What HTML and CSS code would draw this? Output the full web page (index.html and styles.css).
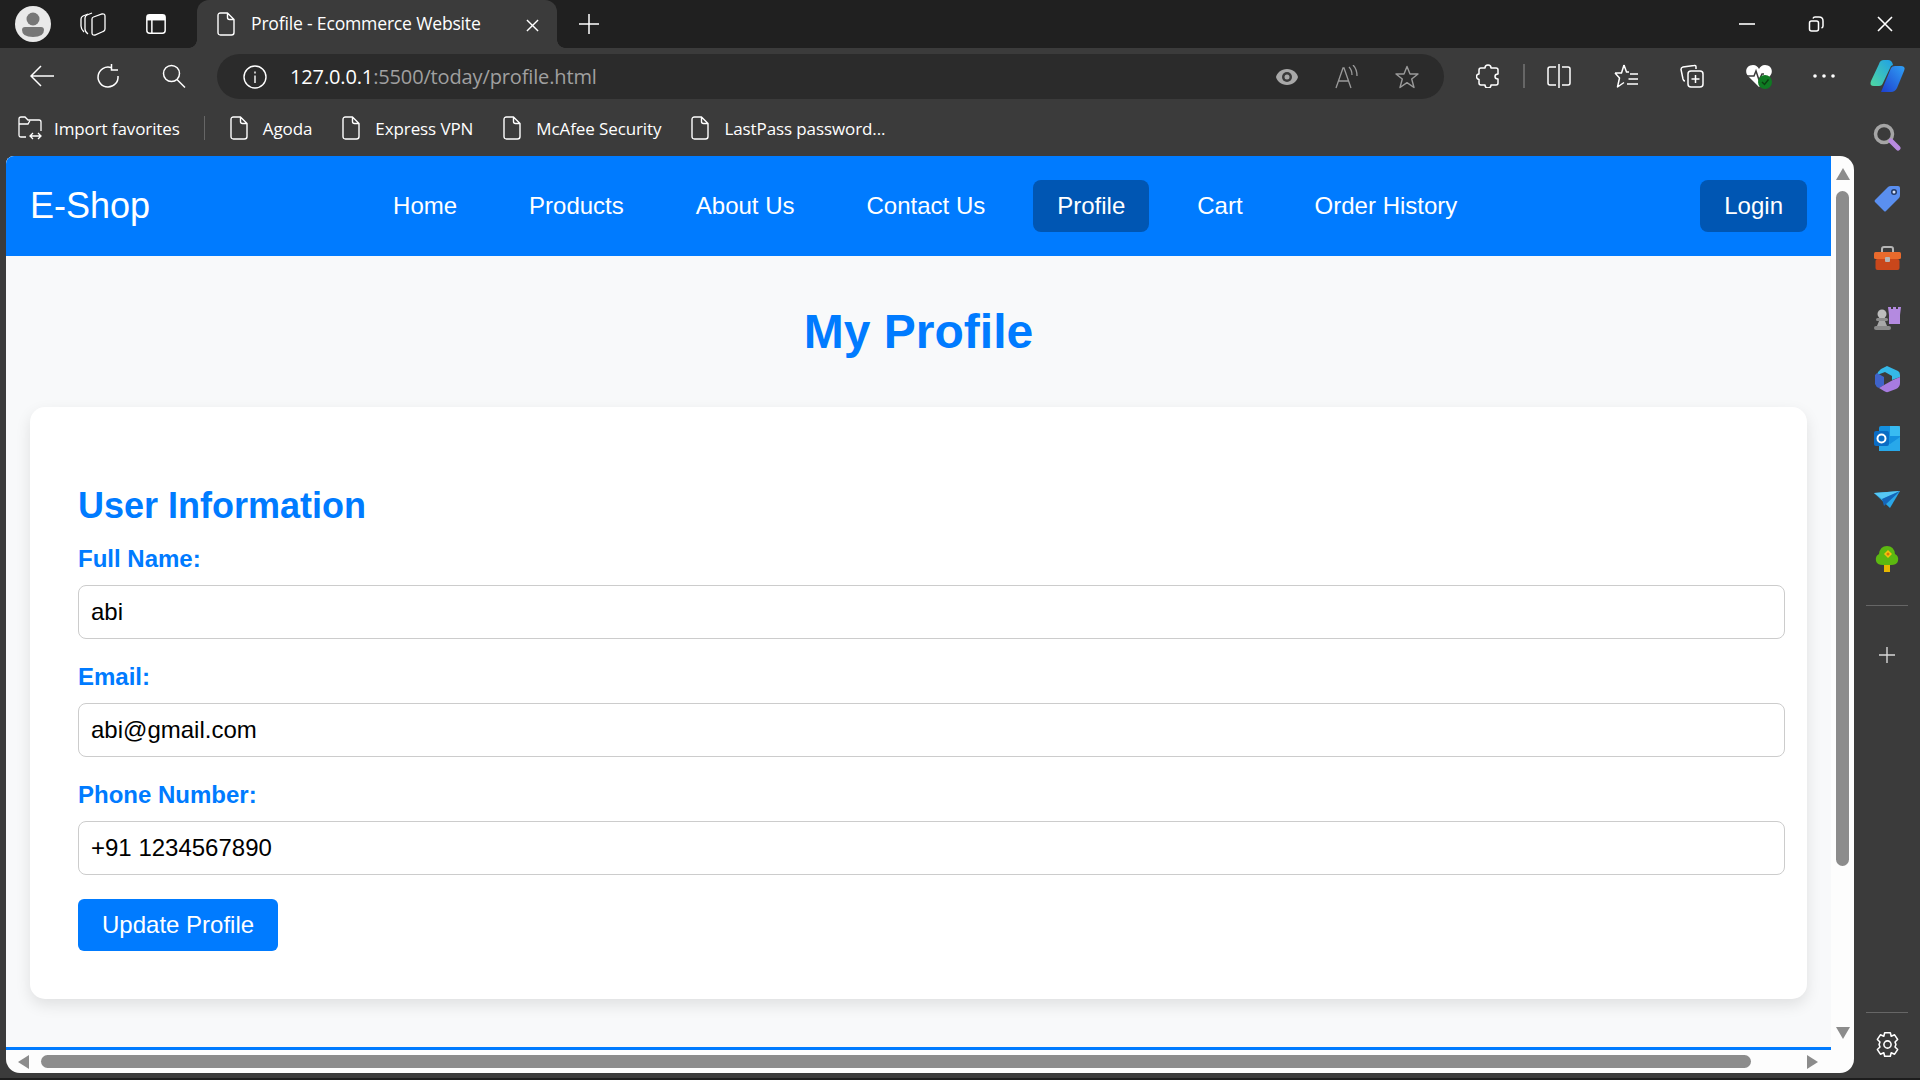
FILE: index.html
```html
<!DOCTYPE html>
<html lang="en">
<head>
<meta charset="utf-8">
<title>Profile - Ecommerce Website</title>
<link rel="stylesheet" href="styles.css">
</head>
<body>
<svg class="defs" width="0" height="0" aria-hidden="true">
  <symbol id="doc" viewBox="0 0 18 24"><path d="M1 3.5Q1 1 3.5 1H10.5L17 7.5V20.500Q17 23 14.500 23H3.500Q1 23 1 20.500ZM10.500 1V5.500Q10.500 7.500 12.500 7.500H17" fill="none" stroke="#fff" stroke-width="1.400" stroke-linejoin="round"/></symbol>
</svg>
<div class="window">
  <header class="tabbar">
    <div class="tabbar-left">
      <svg class="avatar" viewBox="0 0 36 36"><circle cx="18" cy="18" r="18" fill="#e9e9e9"/><circle cx="18" cy="13" r="6.500" fill="#777"/><path d="M7 24Q7 21 10 21H26Q29 21 29 24Q29 31 18 31Q7 31 7 24Z" fill="#777"/></svg>
      <svg class="ic24 wk" viewBox="0 0 26 24" fill="none" stroke="#fff" stroke-width="1.300"><path d="M8 2L3 4Q1 5 1 7V14Q1 17 4 20"/><path d="M12 1L7 3Q5 4 5 6V17Q5 20 8 22"/><path d="M12 7Q12 5.500 13.500 5L22 2Q25 1.500 25 4V17Q25 19 23 19.500L15 23Q12 23.500 12 21Z"/></svg>
      <svg class="ic24 vt" viewBox="0 0 24 24" fill="none" stroke="#fff" stroke-width="1.600"><rect x="2" y="2" width="20" height="20" rx="3"/><path d="M2 7H22M7.500 7V22" /><path d="M3 3H21V7H3Z" fill="#fff"/></svg>
    </div>
    <div class="tab">
      <svg class="doc"><use href="#doc"/></svg>
      <span class="tab-title">Profile - Ecommerce Website</span>
      <svg class="tab-close" viewBox="0 0 14 14" stroke="#fff" stroke-width="1.500"><path d="M1 1L13 13M13 1L1 13"/></svg>
    </div>
    <svg class="newtab" viewBox="0 0 22 22" stroke="#fff" stroke-width="1.500"><path d="M11 1V21M1 11H21"/></svg>
    <div class="winbtns">
      <svg class="wb" viewBox="0 0 16 16" stroke="#fff" stroke-width="1.600"><path d="M0 8H16"/></svg>
      <svg class="wb" viewBox="0 0 16 16" fill="none" stroke="#fff" stroke-width="1.500"><rect x="1.500" y="5" width="9" height="10" rx="2"/><path d="M5 2.500Q5.500 1 7 1H11Q15 1 15 5V10Q15 11.500 13.500 12"/></svg>
      <svg class="wb" viewBox="0 0 16 16" stroke="#fff" stroke-width="1.600"><path d="M1 1L15 15M15 1L1 15"/></svg>
    </div>
  </header>

  <div class="toolbar">
    <svg class="tb back" viewBox="0 0 24 24" fill="none" stroke="#fff" stroke-width="1.500"><path d="M24 12H1M11 2L1 12L11 22"/></svg>
    <svg class="tb reload" viewBox="0 0 24 24" fill="none" stroke="#fff" stroke-width="1.500"><path d="M15 3.500A10 10 0 1 0 22 12M15.500 0V6H22"/></svg>
    <svg class="tb find" viewBox="0 0 24 24" fill="none" stroke="#fff" stroke-width="1.500"><circle cx="9.500" cy="9.500" r="8"/><path d="M15 15.500L23 23.500"/></svg>
    <div class="addressbar">
      <svg class="tb info" viewBox="0 0 24 24" fill="none" stroke="#fff" stroke-width="1.400"><circle cx="12" cy="12" r="11"/><path d="M12 10.500V18M12 6.500V8.500"/></svg>
      <span class="url"><span class="url-host">127.0.0.1</span>:5500/today/profile.html</span>
      <span class="addr-actions">
        <svg class="tb" viewBox="0 0 24 24"><path d="M12 4C6 4 2 8 1 12C2 16 6 20 12 20C18 20 22 16 23 12C22 8 18 4 12 4Z" fill="#a8a8a8"/><circle cx="12" cy="12" r="5" fill="#3a3a3a"/><circle cx="12" cy="12" r="2.500" fill="#a8a8a8"/></svg>
        <svg class="tb" viewBox="0 0 24 24" fill="none" stroke="#9a9a9a" stroke-width="1.300"><path d="M1 23L8 3H9L16 23M3.500 16H13.500M14 2Q17 5 17 10M18 0Q22 4 22 11"/></svg>
        <svg class="tb" viewBox="0 0 24 24" fill="none" stroke="#9a9a9a" stroke-width="1.400"><path d="M12 1.500L15 9H23L16.700 14L19 22.500L12 17.700L5 22.500L7.300 14L1 9H9Z" stroke-linejoin="round"/></svg>
      </span>
    </div>
    <div class="tools">
      <svg class="tb" viewBox="0 0 24 24" fill="none" stroke="#fff" stroke-width="1.500"><path d="M9 4Q9 1 12 1Q15 1 15 4H20Q22 4 22 6V10Q19 10 19 12.500Q19 15 22 15V19Q22 21 20 21H15Q15 24 12 24Q9 24 9 21H5Q3 21 3 19V15.500Q0.500 15 0.500 12.500Q0.500 10 3 10V6Q3 4 5 4Z" stroke-linejoin="round"/></svg>
      <span class="tool-sep"></span>
      <svg class="tb" viewBox="0 0 24 24" fill="none" stroke="#fff" stroke-width="1.500"><path d="M9 3H3Q1 3 1 5V19Q1 21 3 21H9M15 3H21Q23 3 23 5V19Q23 21 21 21H15M12 0V24"/></svg>
      <svg class="tb favs" viewBox="0 0 24 24" fill="none" stroke="#fff" stroke-width="1.500"><path d="M10 1L12.500 8H15M1 9H7.500L10 1M1 9L5.500 14L3.500 23L10 18.500M16 10H24M14.500 15H24M13 20H24" stroke-linejoin="round"/></svg>
      <svg class="tb coll" viewBox="0 0 24 24" fill="none" stroke="#fff" stroke-width="1.500"><path d="M16 5V3Q16 1 14 1.500L3 3Q1 3.500 1 5.500L3 15Q3.500 17 5 17"/><rect x="8" y="7" width="15" height="16" rx="3"/><path d="M15.500 11V19M11.500 15H19.500"/></svg>
      <svg class="tb heart" viewBox="0 0 28 28"><path d="M14 25L3 14C-1 9 2 3 8 3C11 3 13 5 14 7C15 5 17 3 20 3C26 3 29 9 25 14Z" fill="#fff"/><path d="M1 14H9L11 9L14 18L17 12H19" fill="none" stroke="#3b3b3b" stroke-width="1.500"/><circle cx="20" cy="20" r="7" fill="#0f7b23"/><path d="M17 20L19.500 22.500L23.500 17.500" fill="none" stroke="#0b3f12" stroke-width="1.400"/></svg>
      <svg class="tb dots" viewBox="0 0 24 24" fill="#fff"><circle cx="3" cy="12" r="1.800"/><circle cx="12" cy="12" r="1.800"/><circle cx="21" cy="12" r="1.800"/></svg>
      <svg class="copilot" viewBox="0 0 36 32"><defs><linearGradient id="cpa" x1="0" y1="1" x2="1" y2="0"><stop offset="0" stop-color="#4fd8a0"/><stop offset="1" stop-color="#1f9fe8"/></linearGradient><linearGradient id="cpb" x1="0" y1="1" x2="1" y2="0"><stop offset="0" stop-color="#1d3fcf"/><stop offset="1" stop-color="#2fa0f5"/></linearGradient></defs><path d="M24 5Q23 0 19 0H15Q11 0 10 4L2 21Q0 26 5 26H10Q13 26 14 23L22 6Z" fill="url(#cpa)"/><path d="M12 32L22 8Q23 6 26 6H32Q37 6 35 11L28 28Q26 32 22 32Z" fill="url(#cpb)"/></svg>
    </div>
  </div>

  <nav class="bookmarks">
    <span class="bm bm-import">
      <svg class="bm-ic" viewBox="0 0 24 24" fill="none" stroke="#fff" stroke-width="1.300"><path d="M8 21H3Q1 21 1 19V3Q1 1 3 1H7L10 4H21Q23 4 23 6V15"/><path d="M1 8H10L12 4.500M12 20H23M15 17L12 20L15 23M20 17L23 20L20 23"/></svg>
      Import favorites
    </span>
    <span class="bm-sep"></span>
    <span class="bm"><svg class="doc"><use href="#doc"/></svg>Agoda</span>
    <span class="bm"><svg class="doc"><use href="#doc"/></svg>Express VPN</span>
    <span class="bm"><svg class="doc"><use href="#doc"/></svg>McAfee Security</span>
    <span class="bm"><svg class="doc"><use href="#doc"/></svg>LastPass password...</span>
  </nav>

  <div class="workspace">
    <div class="frame">
      <div class="frame-top">
        <div class="page">
          <div class="navbar">
            <span class="logo">E-Shop</span>
            <ul class="navlinks">
              <li class="navlink">Home</li>
              <li class="navlink">Products</li>
              <li class="navlink">About Us</li>
              <li class="navlink">Contact Us</li>
              <li class="navlink active">Profile</li>
              <li class="navlink">Cart</li>
              <li class="navlink">Order History</li>
            </ul>
            <button class="login" type="button">Login</button>
          </div>
          <main class="content">
            <h1 class="title">My Profile</h1>
            <section class="card">
              <h2 class="card-title">User Information</h2>
              <form class="form">
                <label class="label" for="n">Full Name:</label>
                <input class="input" id="n" type="text" value="abi">
                <label class="label" for="e">Email:</label>
                <input class="input" id="e" type="text" value="abi@gmail.com">
                <label class="label" for="p">Phone Number:</label>
                <input class="input" id="p" type="text" value="+91 1234567890">
                <button class="update" type="button">Update Profile</button>
              </form>
            </section>
          </main>
          <div class="footer-edge"></div>
        </div>
        <div class="vscroll">
          <span class="arrow arrow-up"></span>
          <span class="vthumb"></span>
          <span class="arrow arrow-down"></span>
        </div>
      </div>
      <div class="hscroll">
        <span class="arrow arrow-left"></span>
        <span class="hthumb"></span>
        <span class="arrow arrow-right"></span>
      </div>
    </div>

    <aside class="sidebar">
      <svg class="side-ic" viewBox="0 0 28 28"><circle cx="11" cy="11" r="8.500" fill="none" stroke="#a5a5a5" stroke-width="3.500"/><path d="M18 18L25 25" stroke="#b98ae0" stroke-width="5" stroke-linecap="round"/></svg>
      <svg class="side-ic" viewBox="0 0 28 28"><path d="M2 16L15 3Q16 2 18 2H25Q27 2 27 4V11Q27 13 26 14L13 27Q12 28 11 27L2 18Q1 17 2 16Z" fill="#5a8ff0"/><circle cx="21" cy="8" r="3" fill="#243a66"/><circle cx="21" cy="8" r="1.500" fill="#d8e4fb"/></svg>
      <svg class="side-ic" viewBox="0 0 28 28"><path d="M9 7V4Q9 2 11 2H18Q20 2 20 4V7" fill="none" stroke="#b5b5b5" stroke-width="2"/><rect x="1" y="7" width="27" height="7" rx="1.500" fill="#e96a2c"/><rect x="2.500" y="14" width="24" height="11" rx="2" fill="#c9471b"/><rect x="12" y="12" width="5" height="5" rx="1" fill="#b5b5b5"/></svg>
      <svg class="side-ic" viewBox="0 0 28 28"><path d="M16 20V11L15 3H18V5H20V3H23V5H25V3H28L27 11V20Z" fill="#b48ae0"/><circle cx="9" cy="10" r="4.500" fill="#bdbdbd"/><rect x="3" y="14" width="12" height="3" rx="1.500" fill="#8d8d8d"/><path d="M6 17H12L14 22H4Z" fill="#a8a8a8"/><rect x="1" y="22" width="17" height="4" rx="2" fill="#8a8a8a"/></svg>
      <svg class="side-ic" viewBox="0 0 28 28"><path d="M14 1L25 6Q27 7 27 10V12L19 15V11L12 7L4 10Q5 6 8 4Z" fill="#35b8e8"/><path d="M2 10L4 8L11 12V20L6 23Q3 22 2 19Z" fill="#3f63c9"/><path d="M11 20L20 15L27 12V18Q27 22 23 24L15 27Q13 27.500 11 26L6 23Z" fill="#a77be0"/></svg>
      <svg class="side-ic" viewBox="0 0 28 28"><path d="M8 2H25Q27 2 27 4V25Q27 27 25 27H6V4Q6 2 8 2Z" fill="#1490df"/><path d="M6 13L17 20L27 13V27H6Z" fill="#28a8ea"/><rect x="17" y="2" width="10" height="10" fill="#50d9ff" opacity=".6"/><rect x="1" y="7" width="15" height="15" rx="2" fill="#0a6cc4"/><circle cx="8.500" cy="14.500" r="4" fill="none" stroke="#fff" stroke-width="2"/></svg>
      <svg class="side-ic" viewBox="0 0 28 28"><path d="M1 9L27 7L17 24Z" fill="#2aa7e8"/><path d="M1 9L9 15L27 7Z" fill="#56c8f5"/><path d="M9 15L11 22L27 7Z" fill="#1565b8"/></svg>
      <svg class="side-ic" viewBox="0 0 28 28"><path d="M14 1Q21 1 22 9Q26 11 25 16Q24 20 18 20H10Q4 20 3 16Q2 11 6 9Q7 1 14 1Z" fill="#5cb811"/><rect x="11" y="20" width="6" height="7" fill="#e8b800"/><path d="M15 5L19 9L15 13L11 9Z" fill="#f4c20d"/><circle cx="15" cy="9" r="1.500" fill="#d8760a"/></svg>
      <span class="side-sep"></span>
      <svg class="side-plus" viewBox="0 0 20 20" stroke="#d8d8d8" stroke-width="1.400"><path d="M10 2V18M2 10H18"/></svg>
      <span class="side-spacer"></span>
      <span class="side-sep side-sep-low"></span>
      <svg class="side-gear" viewBox="0 0 24 24" fill="none" stroke="#fff" stroke-width="1.400" stroke-linejoin="round"><path d="M9.500 1.500H14.500L15.300 4.700L18.300 3.400L21 7.500L18.700 9.800L19.500 12L18.700 14.200L21 16.500L18.300 20.600L15.300 19.300L14.500 22.500H9.500L8.700 19.300L5.700 20.600L3 16.500L5.300 14.200L4.500 12L5.300 9.800L3 7.500L5.700 3.400L8.700 4.700Z"/><circle cx="12" cy="12" r="3.200"/></svg>
    </aside>
  </div>
  <div class="bottom-edge"></div>
</div>
</body>
</html>
```

FILE: styles.css
```css
* { box-sizing: border-box; }
html, body { margin: 0; padding: 0; height: 100%; overflow: hidden; }
body { background: #3b3b3b; font-family: "Liberation Sans", Arial, sans-serif; }
.defs { position: absolute; }
.window { width: 1920px; height: 1080px; display: flex; flex-direction: column; }

/* tab strip */
.tabbar { height: 48px; background: #202020; display: flex; align-items: center; flex: none; }
.tabbar-left { width: 197px; display: flex; align-items: center; padding-left: 15px; flex: none; }
.avatar { width: 36px; height: 36px; }
.ic24 { width: 24px; height: 24px; }
.wk { margin-left: 29px; width: 26px; }
.vt { margin-left: 39px; width: 22px; height: 22px; }
.tab { position: relative; width: 360px; height: 48px; background: #3b3b3b; border-radius: 12px 12px 0 0; display: flex; align-items: center; padding-left: 20px; flex: none; }
.tab::before, .tab::after { content: ""; position: absolute; bottom: 0; width: 8px; height: 8px; }
.tab::before { left: -8px; background: radial-gradient(circle at 0 0, #202020 7.5px, #3b3b3b 8px); }
.tab::after { right: -8px; background: radial-gradient(circle at 100% 0, #202020 7.5px, #3b3b3b 8px); }
.doc { width: 18px; height: 24px; flex: none; }
.tab-title { margin: 0 0 2px 16px; font: 17.6px "Open Sans", sans-serif; letter-spacing: -.2px; color: #fff; width: 275px; white-space: nowrap; }
.tab-close { width: 13px; height: 13px; margin-top: 2px; flex: none; }
.newtab { width: 22px; height: 22px; margin-left: 21px; flex: none; }
.winbtns { margin-left: auto; display: flex; gap: 53px; padding-right: 27px; align-items: center; }
.wb { width: 16px; height: 16px; }

/* toolbar */
.toolbar { height: 52px; padding-top: 6px; display: flex; align-items: flex-start; flex: none; }
.tb { width: 24px; height: 24px; flex: none; }
.back { margin: 10px 0 0 30px; }
.reload { margin: 10px 0 0 42px; }
.find { margin: 10px 0 0 42px; }
.addressbar { margin-left: 31px; width: 1227px; height: 45px; background: #2b2b2b; border-radius: 23px; display: flex; align-items: center; padding-left: 26px; flex: none; }
.url { margin-left: 23px; font: 20px "Open Sans", sans-serif; letter-spacing: -.14px; color: #a0a0a0; white-space: nowrap; }
.url-host { color: #fff; }
.addr-actions { margin-left: auto; display: flex; gap: 36px; padding-right: 25.5px; }
.tools { display: flex; align-items: center; margin: 10px 0 0 32px; height: 24px; }
.tool-sep { width: 2px; height: 24px; background: #666; margin: 0 22px 0 23px; }
.favs { margin-left: 43px; }
.coll { margin-left: 42px; }
.heart { width: 28px; height: 28px; margin-left: 41px; }
.dots { margin-left: 39px; }
.copilot { width: 36px; height: 32px; margin-left: 33px; flex: none; }

/* bookmarks */
.bookmarks { height: 56px; display: flex; align-items: center; padding: 0 0 0 18px; flex: none; }
.bm { display: flex; align-items: center; gap: 15px; font: 17px "Open Sans", sans-serif; letter-spacing: -.1px; color: #fff; white-space: nowrap; margin-right: 30px; }
.bm-import { gap: 12px; margin-right: 24px; }
.bm-ic { width: 24px; height: 24px; flex: none; }
.bm-sep { width: 1px; height: 24px; background: #666; margin-right: 25px; }

/* browser frame */
.workspace { height: 917px; display: flex; flex: none; }
.frame { width: 1848px; margin-left: 6px; display: flex; flex-direction: column; background: #fdfdfd; border-radius: 8px 14px 14px 14px; overflow: hidden; flex: none; }
.frame-top { height: 894px; display: flex; flex: none; }
.page { width: 1825px; background: #f8f9fa; overflow: hidden; flex: none; }

/* page */
.navbar { height: 100px; background: #007bff; padding: 0 24px; display: flex; align-items: center; justify-content: space-between; }
.logo { color: #fff; font-size: 36px; }
.navlinks { list-style: none; margin: 0; padding: 0; display: flex; gap: 24px; }
.navlink { color: #fff; font-size: 24px; line-height: 28px; padding: 12px 24px; border-radius: 8px; }
.navlink.active { background: #0056b3; }
.login { background: #0056b3; color: #fff; border: 0; font: 24px/28px "Liberation Sans", Arial, sans-serif; padding: 12px 24px; border-radius: 8px; }
.content { padding: 48px 24px; }
.title { margin: 0 0 48px; color: #007bff; font-size: 48px; line-height: 55px; text-align: center; font-weight: 700; }
.card { background: #fff; border-radius: 15px; padding: 48px; box-shadow: 0 6px 15px rgba(0, 0, 0, .1); }
.card-title { margin: 30px 0 19px; color: #007bff; font-size: 36px; line-height: 41px; font-weight: 700; }
.form { display: flex; flex-direction: column; align-items: flex-start; }
.label { color: #007bff; font-size: 24px; line-height: 27px; font-weight: 700; margin-bottom: 13px; }
.input { box-sizing: content-box; width: 100%; height: 26px; padding: 13px 12px; border: 1px solid #ccc; border-radius: 8px; margin-bottom: 24px; font: 24px/26px "Liberation Sans", Arial, sans-serif; color: #000; background: #fff; flex: none; }
.update { background: #007bff; color: #fff; border: 0; font: 24px/28px "Liberation Sans", Arial, sans-serif; padding: 12px 24px; border-radius: 6px; }
.footer-edge { height: 40px; background: #007bff; }

/* fake scrollbars */
.vscroll { flex: 1; display: flex; flex-direction: column; align-items: center; padding: 12px 0 11px; }
.vthumb { width: 13px; height: 675px; margin-top: 11px; background: #8c8c8c; border-radius: 7px; }
.arrow { width: 0; height: 0; border-style: solid; border-color: transparent; display: block; flex: none; }
.arrow-up { border-width: 0 7px 12px; border-bottom-color: #8c8c8c; }
.arrow-down { border-width: 12px 7px 0; border-top-color: #8c8c8c; margin-top: auto; }
.hscroll { flex: 1; display: flex; align-items: center; padding: 0 0 0 12px; }
.arrow-left { border-width: 7px 11px 7px 0; border-right-color: #8c8c8c; }
.hthumb { width: 1710px; height: 13px; margin-left: 12px; background: #8c8c8c; border-radius: 7px; }
.arrow-right { border-width: 7px 0 7px 11px; border-left-color: #8c8c8c; margin-left: 56px; }

/* sidebar */
.sidebar { flex: 1; display: flex; flex-direction: column; align-items: center; }
.side-ic { width: 28px; height: 28px; margin-top: 33px; flex: none; }
.side-ic:nth-child(1) { margin-top: -33px; }
.side-ic:nth-child(4), .side-ic:nth-child(6) { margin-top: 31px; }
.side-ic:nth-child(7) { margin-top: 32px; }
.side-sep { width: 42px; height: 1px; background: #666; margin-top: 32px; flex: none; }
.side-plus { width: 20px; height: 20px; margin-top: 39px; flex: none; }
.side-spacer { flex: 1; }
.side-sep-low { margin: 0; }
.side-gear { width: 27px; height: 27px; margin: 18px 0 15px; flex: none; }
.bottom-edge { flex: 1; background: #1d1d1d; margin-top: 5px; }
```
